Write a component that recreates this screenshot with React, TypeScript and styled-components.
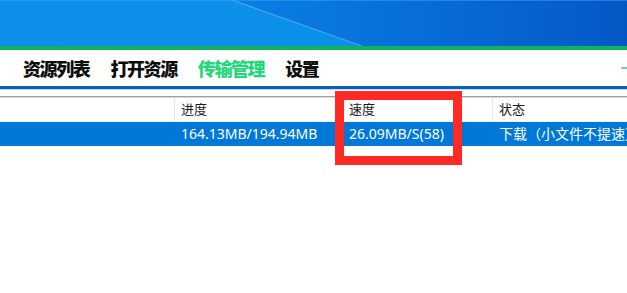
import styled, { createGlobalStyle } from 'styled-components';

const GlobalStyle = createGlobalStyle`
    html, body {
        margin: 0;
        padding: 0;
        background: #ffffff;
    }
    body {
        font-family: "Noto Sans", "Noto Sans CJK SC", sans-serif;
        width: 627px;
        height: 293px;
        overflow: hidden;
    }
`;

const columns = [
    { key: 'name', title: '', width: 175 },
    { key: 'progress', title: '进度', width: 168 },
    { key: 'speed', title: '速度', width: 150 },
    { key: 'status', title: '状态', width: 200 },
];

const row: Record<string, string> = {
    name: '',
    progress: '164.13MB/194.94MB',
    speed: '26.09MB/S(58)',
    status: '下载（小文件不提速）',
};

const tabs = [
    { text: '资源列表', active: false },
    { text: '打开资源', active: false },
    { text: '传输管理', active: true },
    { text: '设置', active: false },
];

const Wallpaper = () => (
    <WallpaperBox>
        <svg width="627" height="46" viewBox="0 0 627 46">
            <defs>
                <linearGradient id="wl" x1="0" y1="0" x2="1" y2="0">
                    <stop offset="0" stopColor="#0c90ea" />
                    <stop offset="1" stopColor="#0a8fe9" />
                </linearGradient>
                <linearGradient id="wr" x1="0" y1="0" x2="1" y2="0">
                    <stop offset="0" stopColor="#0a80e3" />
                    <stop offset="0.5" stopColor="#076cd8" />
                    <stop offset="1" stopColor="#0458c6" />
                </linearGradient>
            </defs>
            <rect x="0" y="0" width="627" height="46" fill="url(#wl)" />
            <polygon points="232,0 627,0 627,46 362,46" fill="url(#wr)" />
            <line x1="232" y1="0" x2="362" y2="46" stroke="#5fb2f2" strokeWidth="1.2" opacity="0.7" />
            <rect x="0" y="0" width="627" height="1" fill="#3aa4ee" opacity="0.5" />
        </svg>
    </WallpaperBox>
);

const App = () => {
    return (
        <Page>
            <GlobalStyle />
            <Wallpaper />
            <GreenBar />
            <Nav>
                {tabs.map((t) => (
                    <Tab key={t.text} $active={t.active}>
                        {t.text}
                    </Tab>
                ))}
                <Minimize />
            </Nav>
            <BlueRule />
            <Table>
                <HeaderRow>
                    {columns.map((c) => (
                        <HeaderCell key={c.key} $width={c.width}>
                            {c.title}
                        </HeaderCell>
                    ))}
                </HeaderRow>
                <DataRow>
                    {columns.map((c) => (
                        <DataCell key={c.key} $width={c.width}>
                            {row[c.key]}
                        </DataCell>
                    ))}
                </DataRow>
                <Highlight />
            </Table>
        </Page>
    );
};
export default App;

const Page = styled.div`
    width: 627px;
    height: 293px;
    display: flex;
    flex-direction: column;
    background: #ffffff;
    overflow: hidden;
`;

const WallpaperBox = styled.div`
    height: 46px;
    flex-shrink: 0;
    svg {
        display: block;
    }
`;

const GreenBar = styled.div`
    height: 4px;
    background: #0db45c;
    flex-shrink: 0;
`;

const Nav = styled.div`
    height: 36px;
    display: flex;
    align-items: center;
    gap: 21px;
    padding-left: 23px;
    position: relative;
    flex-shrink: 0;
`;

const Tab = styled.div<{ $active: boolean }>`
    font-family: "Noto Sans CJK SC", sans-serif;
    font-size: 18px;
    font-weight: 900;
    line-height: 36px;
    color: ${(p) => (p.$active ? '#1fd87a' : '#0d0d0d')};
    letter-spacing: -1.4px;
`;

const Minimize = styled.span`
    position: absolute;
    right: 0;
    top: 17px;
    width: 6px;
    height: 2px;
    background: #6fd0c0;
`;

const BlueRule = styled.div`
    height: 3px;
    background: #0a5fc2;
    border-bottom: 1px solid #c6d8ee;
    flex-shrink: 0;
    margin-bottom: 6px;
`;

const Table = styled.div`
    position: relative;
    display: flex;
    flex-direction: column;
    border-top: 1px solid #a0a0a0;
    box-shadow: inset 0 1px 0 #d8d8d8;
`;

const HeaderRow = styled.div`
    display: flex;
    height: 24px;
    border-bottom: 1px solid #f0f0f0;
`;

const HeaderCell = styled.div<{ $width: number }>`
    flex: 0 0 ${(p) => p.$width}px;
    box-sizing: border-box;
    padding-left: 6px;
    border-right: 1px solid #e5e5e5;
    font-family: "Noto Sans CJK SC", sans-serif;
    font-size: 13px;
    line-height: 24px;
    color: #1a1a1a;
    white-space: nowrap;
    overflow: hidden;
`;

const DataRow = styled.div`
    display: flex;
    height: 24px;
    background: #0078d7;
`;

const DataCell = styled.div<{ $width: number }>`
    flex: 0 0 ${(p) => p.$width}px;
    box-sizing: border-box;
    padding-left: 6px;
    font-family: "Noto Sans", "Noto Sans CJK SC", sans-serif;
    font-size: 14px;
    line-height: 24px;
    color: #ffffff;
    white-space: nowrap;
    overflow: hidden;
`;

const Highlight = styled.div`
    position: absolute;
    left: 335px;
    top: -6px;
    width: 127px;
    height: 74px;
    box-sizing: border-box;
    border: 9px solid #ff2a24;
`;
